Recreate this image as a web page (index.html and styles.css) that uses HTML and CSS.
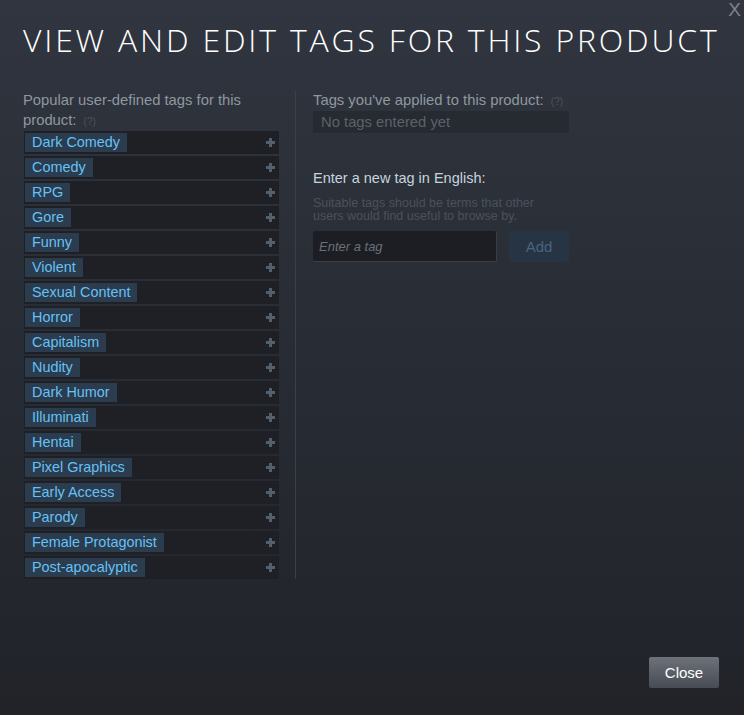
FILE: index.html
```html
<!DOCTYPE html>
<html lang="en">
<head>
    <meta charset="UTF-8">
    <meta name="viewport" content="width=device-width, initial-scale=1.0">
    <title>View and Edit Tags</title>
    <link rel="stylesheet" href="styles.css">
</head>
<body>

    <div class="modal">
        <div class="close-x">X</div>
        <h2 class="title">VIEW AND EDIT TAGS FOR THIS PRODUCT</h2>

        <div class="columns">
            <div class="col-left">
                <div class="label">Popular user-defined tags for this product: <span class="help">(?)</span></div>
                <div class="tag-list">
                    <div class="tag-row"><span class="tag">Dark Comedy</span><span class="plus"></span></div>
                    <div class="tag-row"><span class="tag">Comedy</span><span class="plus"></span></div>
                    <div class="tag-row"><span class="tag">RPG</span><span class="plus"></span></div>
                    <div class="tag-row"><span class="tag">Gore</span><span class="plus"></span></div>
                    <div class="tag-row"><span class="tag">Funny</span><span class="plus"></span></div>
                    <div class="tag-row"><span class="tag">Violent</span><span class="plus"></span></div>
                    <div class="tag-row"><span class="tag">Sexual Content</span><span class="plus"></span></div>
                    <div class="tag-row"><span class="tag">Horror</span><span class="plus"></span></div>
                    <div class="tag-row"><span class="tag">Capitalism</span><span class="plus"></span></div>
                    <div class="tag-row"><span class="tag">Nudity</span><span class="plus"></span></div>
                    <div class="tag-row"><span class="tag">Dark Humor</span><span class="plus"></span></div>
                    <div class="tag-row"><span class="tag">Illuminati</span><span class="plus"></span></div>
                    <div class="tag-row"><span class="tag">Hentai</span><span class="plus"></span></div>
                    <div class="tag-row"><span class="tag">Pixel Graphics</span><span class="plus"></span></div>
                    <div class="tag-row"><span class="tag">Early Access</span><span class="plus"></span></div>
                    <div class="tag-row"><span class="tag">Parody</span><span class="plus"></span></div>
                    <div class="tag-row"><span class="tag">Female Protagonist</span><span class="plus"></span></div>
                    <div class="tag-row"><span class="tag">Post-apocalyptic</span><span class="plus"></span></div>
                </div>
            </div>

            <div class="col-right">
                <div class="label">Tags you've applied to this product: <span class="help">(?)</span></div>
                <div class="applied">No tags entered yet</div>

                <div class="new-tag-title">Enter a new tag in English:</div>
                <div class="new-tag-hint">Suitable tags should be terms that other users would find useful to browse by.</div>
                <div class="new-tag-form">
                    <input type="text" class="tag-input" placeholder="Enter a tag">
                    <button class="add-btn">Add</button>
                </div>
            </div>
        </div>

        <div class="footer">
            <button class="close-btn">Close</button>
        </div>
    </div>

</body>
</html>
```

FILE: styles.css
```css
body {
    margin: 0;
    font-family: "Liberation Sans", Arial, sans-serif;
    background: linear-gradient(to bottom, #30353f 0%, #272b33 55%, #212329 100%);
    height: 100vh;
}
.modal {
    position: relative;
    box-sizing: border-box;
    height: 100vh;
    padding: 22px 25px 27px 23px;
    display: flex;
    flex-direction: column;
}
.close-x {
    position: absolute;
    top: 0;
    right: 3px;
    font-size: 19px;
    line-height: 19px;
    color: #7d838c;
}
.title {
    margin: 0;
    font-family: "Open Sans", sans-serif;
    font-weight: 300;
    font-size: 32px;
    line-height: 36px;
    letter-spacing: 2.8px;
    color: #ffffff;
    white-space: nowrap;
}
.columns {
    display: flex;
    margin-top: 32px;
}
.col-left {
    width: 256px;
    padding-right: 16px;
    border-right: 1px solid #3a3f48;
}
.col-right {
    width: 256px;
    padding-left: 17px;
}
.label {
    font-size: 14.8px;
    line-height: 20px;
    color: #8f98a0;
}
.help {
    font-size: 10px;
    line-height: 10px;
    color: #4c545e;
    margin-left: 3px;
}
.tag-list {
    display: flex;
    flex-direction: column;
    gap: 2px;
    margin-top: 1px;
}
.tag-row {
    height: 23px;
    margin-left: 1px;
    background-color: #1e2025;
    display: flex;
    align-items: center;
    justify-content: space-between;
}
.tag {
    margin-left: 1px;
    height: 19px;
    line-height: 19px;
    padding: 0 7px;
    font-size: 14.4px;
    color: #67c1f5;
    background-color: #2a3c4e;
}
.plus {
    position: relative;
    width: 9px;
    height: 9px;
    margin-right: 4px;
}
.plus::before, .plus::after {
    content: "";
    position: absolute;
    background-color: #52606e;
}
.plus::before {
    left: 3px;
    top: 0;
    width: 3px;
    height: 9px;
}
.plus::after {
    left: 0;
    top: 3px;
    width: 9px;
    height: 3px;
}
.applied {
    margin-top: 1px;
    height: 22px;
    line-height: 22px;
    padding-left: 8px;
    font-size: 14.8px;
    color: #5b626b;
    background-color: #262a31;
}
.new-tag-title {
    margin-top: 35px;
    font-size: 14.5px;
    line-height: 20px;
    color: #c6d4df;
}
.new-tag-hint {
    width: 240px;
    margin-top: 9px;
    font-size: 12.5px;
    line-height: 13px;
    color: #4a525c;
}
.new-tag-form {
    display: flex;
    gap: 12px;
    margin-top: 8px;
}
.tag-input {
    box-sizing: border-box;
    width: 184px;
    height: 31px;
    padding: 0 6px;
    border: none;
    border-right: 1px solid #3a3f47;
    border-bottom: 1px solid #3a3f47;
    border-radius: 2px;
    background-color: #1c1e23;
    color: #c6d4df;
    font-family: "Liberation Sans", Arial, sans-serif;
    font-size: 13px;
}
.tag-input::placeholder {
    font-style: italic;
    color: #6a707a;
}
.add-btn {
    width: 60px;
    height: 31px;
    border: none;
    border-radius: 2px;
    background-color: #263443;
    color: #48657f;
    font-family: "Liberation Sans", Arial, sans-serif;
    font-size: 15px;
}
.footer {
    margin-top: auto;
    display: flex;
    justify-content: flex-end;
}
.close-btn {
    width: 70px;
    height: 31px;
    border: none;
    border-radius: 2px;
    background: linear-gradient(to bottom, #6d727a 0%, #474c54 100%);
    color: #ffffff;
    font-family: "Liberation Sans", Arial, sans-serif;
    font-size: 15px;
    cursor: pointer;
}
```
